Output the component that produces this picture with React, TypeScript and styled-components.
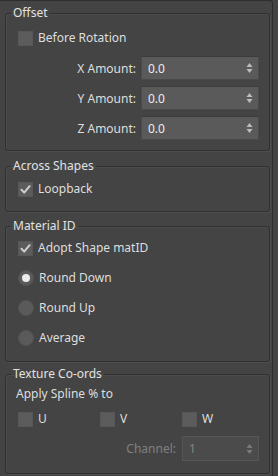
import * as React from "react";
import styled, { createGlobalStyle } from "styled-components";

const GlobalStyle = createGlobalStyle`
  html, body {
    margin: 0;
    padding: 0;
    background: #444444;
  }
  body {
    font-family: "Noto Sans", "Liberation Sans", sans-serif;
    font-size: 12px;
    color: #dedede;
  }
`;

const App: React.FC = () => {
  return (
    <>
      <GlobalStyle />
      <Panel>
        <Group $top={4} $pad="9px 0 10px">
          <Legend>Offset</Legend>
          <CheckRow>
            <CheckBox />
            <span>Before Rotation</span>
          </CheckRow>
          <SpinnerList>
            <SpinnerRow label="X Amount:" value="0.0" />
            <SpinnerRow label="Y Amount:" value="0.0" />
            <SpinnerRow label="Z Amount:" value="0.0" />
          </SpinnerList>
        </Group>

        <Group $top={7} $pad="7px 0 14px">
          <Legend>Across Shapes</Legend>
          <CheckRow>
            <CheckBox checked />
            <span>Loopback</span>
          </CheckRow>
        </Group>

        <Group $top={6} $pad="6px 0 15px">
          <Legend>Material ID</Legend>
          <OptionList>
            <CheckRow>
              <CheckBox checked />
              <span>Adopt Shape matID</span>
            </CheckRow>
            <CheckRow>
              <Radio $on />
              <span>Round Down</span>
            </CheckRow>
            <CheckRow>
              <Radio />
              <span>Round Up</span>
            </CheckRow>
            <CheckRow>
              <Radio />
              <span>Average</span>
            </CheckRow>
          </OptionList>
        </Group>

        <Group $top={4} $pad="4px 0 12px">
          <Legend>Texture Co-ords</Legend>
          <Caption>Apply Spline % to</Caption>
          <AxisGrid>
            {["U", "V", "W"].map((a) => (
              <CheckRow key={a}>
                <CheckBox />
                <span>{a}</span>
              </CheckRow>
            ))}
          </AxisGrid>
          <ChannelRow>
            <DimLabel>Channel:</DimLabel>
            <Spinner $disabled $w={77} $h={25}>
              <span>1</span>
              <Arrows $disabled />
            </Spinner>
          </ChannelRow>
        </Group>
      </Panel>
    </>
  );
};

export default App;

const CheckBox: React.FC<{ checked?: boolean }> = ({ checked }) => (
  <Box>
    {checked && (
      <svg width="11" height="11" viewBox="0 0 11 11">
        <path
          d="M1.5 5.8 L4.2 8.6 L9.6 2.2"
          fill="none"
          stroke="#cfcfcf"
          strokeWidth="2"
          strokeLinecap="round"
          strokeLinejoin="round"
        />
      </svg>
    )}
  </Box>
);

const Arrows: React.FC<{ $disabled?: boolean }> = ({ $disabled }) => {
  const c = $disabled ? "#7a7a7a" : "#bdbdbd";
  return (
    <ArrowSvg width="7" height="12" viewBox="0 0 7 12">
      <path d="M3.5 1 L6.5 5 L0.5 5 Z" fill={c} />
      <path d="M3.5 11 L6.5 7 L0.5 7 Z" fill={c} />
    </ArrowSvg>
  );
};

const SpinnerRow: React.FC<{ label: string; value: string }> = ({
  label,
  value,
}) => (
  <SpinLine>
    <SpinLabel>{label}</SpinLabel>
    <Spinner $w={118} $h={24}>
      <span>{value}</span>
      <Arrows />
    </Spinner>
  </SpinLine>
);

/* Styles */
const Panel = styled.div`
  box-sizing: border-box;
  width: 273px;
  min-height: 100vh;
  border-top: 1px solid #2e2e2e;
  border-right: 1px solid #2e2e2e;
  border-top-right-radius: 3px;
  display: flex;
  flex-direction: column;
`;

const Group = styled.fieldset<{ $top: number; $pad: string }>`
  margin: ${(p) => p.$top}px 2px 0 5px;
  padding: ${(p) => p.$pad};
  border: 1px solid #303030;
  border-radius: 3px;
  box-shadow: 1px 1px 0 #4e4e4e, inset 1px 1px 0 #4c4c4c;
  min-width: 0;
`;

const Legend = styled.legend`
  margin-left: 5px;
  padding: 0 2px;
  font-size: 12px;
  line-height: 16px;
  color: #e2e2e2;
`;

const CheckRow = styled.div`
  display: flex;
  align-items: center;
  gap: 5px;
  height: 16px;
  padding-left: 12px;
  line-height: 16px;
  white-space: nowrap;
`;

const Box = styled.div`
  box-sizing: border-box;
  width: 15px;
  height: 15px;
  background: #5c5c5c;
  border: 1px solid #575757;
  display: flex;
  align-items: center;
  justify-content: center;
`;

const Radio = styled.div<{ $on?: boolean }>`
  box-sizing: border-box;
  width: 16px;
  height: 16px;
  border-radius: 50%;
  background: #5a5a5a;
  border: 1px solid #535353;
  display: flex;
  align-items: center;
  justify-content: center;
  &::after {
    content: "";
    display: ${(p) => (p.$on ? "block" : "none")};
    width: 8px;
    height: 8px;
    border-radius: 50%;
    background: #ececec;
  }
`;

const OptionList = styled.div`
  display: flex;
  flex-direction: column;
  gap: 14px;
`;

const SpinnerList = styled.div`
  margin-top: 10px;
  display: flex;
  flex-direction: column;
  gap: 6px;
`;

const SpinLine = styled.div`
  display: flex;
  align-items: center;
  justify-content: flex-end;
  gap: 5px;
  padding-right: 10px;
`;

const SpinLabel = styled.span`
  white-space: nowrap;
`;

const Spinner = styled.div<{ $w: number; $h: number; $disabled?: boolean }>`
  box-sizing: border-box;
  width: ${(p) => p.$w}px;
  height: ${(p) => p.$h}px;
  display: flex;
  align-items: center;
  justify-content: space-between;
  padding: 0 5px 0 6px;
  background: ${(p) => (p.$disabled ? "#4b4b4b" : "#5a5a5a")};
  border: 1px solid ${(p) => (p.$disabled ? "#565656" : "#4a4a4a")};
  border-top-color: ${(p) => (p.$disabled ? "#565656" : "#3c3c3c")};
  color: ${(p) => (p.$disabled ? "#858585" : "#ececec")};
  font-size: 12px;
`;

const ArrowSvg = styled.svg`
  display: block;
`;

const Caption = styled.div`
  padding-left: 10px;
  line-height: 16px;
`;

const AxisGrid = styled.div`
  margin-top: 9px;
  display: grid;
  grid-template-columns: 82px 82px 82px;
`;

const ChannelRow = styled.div`
  margin-top: 9px;
  display: flex;
  align-items: center;
  justify-content: flex-end;
  gap: 6px;
  padding-right: 10px;
`;

const DimLabel = styled.span`
  color: #808080;
`;
